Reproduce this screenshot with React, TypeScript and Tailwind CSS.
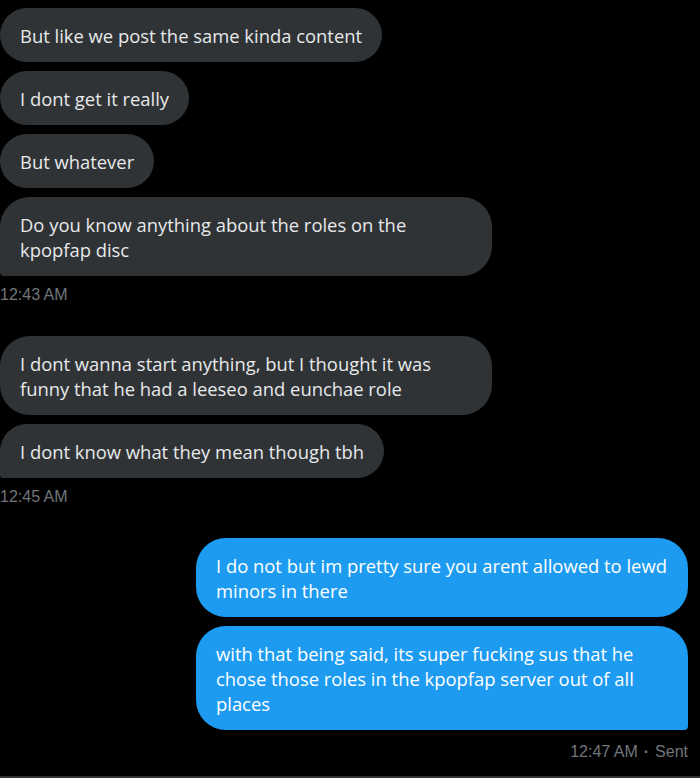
import React from 'react';

type Msg = { text: React.ReactNode; wide?: boolean; tail?: boolean };

const received: Msg[][] = [
  [
    { text: 'But like we post the same kinda content' },
    { text: 'I dont get it really' },
    { text: 'But whatever' },
    {
      text: (
        <>
          Do you know anything about the roles on the
          <br />
          kpopfap disc
        </>
      ),
      wide: true,
      tail: true,
    },
  ],
  [
    {
      text: (
        <>
          I dont wanna start anything, but I thought it was
          <br />
          funny that he had a leeseo and eunchae role
        </>
      ),
      wide: true,
    },
    { text: 'I dont know what they mean though tbh', tail: true },
  ],
];

const sent: Msg[] = [
  {
    text: (
      <>
        I do not but im pretty sure you arent allowed to lewd
        <br />
        minors in there
      </>
    ),
    wide: true,
  },
  {
    text: (
      <>
        with that being said, its super fucking sus that he
        <br />
        chose those roles in the kpopfap server out of all
        <br />
        places
      </>
    ),
    wide: true,
    tail: true,
  },
];

const bubbleText = "font-['Open_Sans',sans-serif] text-[18.4px] leading-[25px] px-5 py-[14.5px]";
const stampText = "font-['Liberation_Sans',Arial,sans-serif] text-[16px] leading-[20px] text-[#71767b]";

export default function App() {
  const times = ['12:43 AM', '12:45 AM'];

  return (
    <div className="min-h-[778px] w-[700px] bg-black flex flex-col pt-2 pr-3 border-b-2 border-[#2f3336]">
      {received.map((group, gi) => (
        <div key={gi} className="flex flex-col items-start mb-[31px]">
          <div className="flex flex-col items-start gap-[9px]">
            {group.map((m, i) => (
              <div
                key={i}
                className={`${bubbleText} bg-[#2f3336] text-[#e7e9ea] rounded-[30px] ${
                  m.wide ? 'w-[492px]' : ''
                } ${m.tail ? 'rounded-bl-[4px]' : ''}`}
              >
                {m.text}
              </div>
            ))}
          </div>
          <div className={`${stampText} mt-[9px]`}>{times[gi]}</div>
        </div>
      ))}

      <div className="flex flex-col items-end">
        <div className="flex flex-col items-end gap-[9px]">
          {sent.map((m, i) => (
            <div
              key={i}
              className={`${bubbleText} bg-[#1d9bf0] text-white rounded-[30px] ${
                m.wide ? 'w-[492px]' : ''
              } ${m.tail ? 'rounded-br-[4px]' : ''}`}
            >
              {m.text}
            </div>
          ))}
        </div>
        <div className={`${stampText} mt-3 flex items-center gap-[6px]`}>
          <span>12:47 AM</span>
          <span className="font-bold">·</span>
          <span>Sent</span>
        </div>
      </div>
    </div>
  );
}
